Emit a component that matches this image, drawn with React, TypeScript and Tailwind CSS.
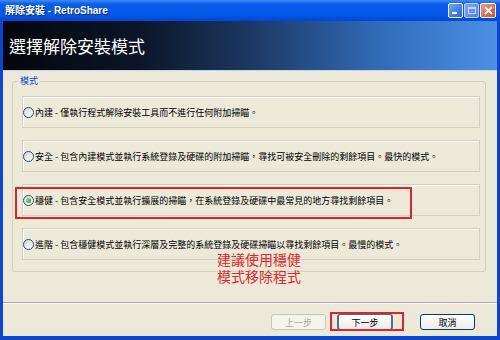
import React from "react";

const rows = [
  { text: "內建 - 僅執行程式解除安裝工具而不進行任何附加掃瞄。", checked: false },
  { text: "安全 - 包含內建模式並執行系統登錄及硬碟的附加掃瞄，尋找可被安全刪除的剩餘項目。最快的模式。", checked: false },
  { text: "穩健 - 包含安全模式並執行擴展的掃瞄，在系統登錄及硬碟中最常見的地方尋找剩餘項目。", checked: true },
  { text: "進階 - 包含穩健模式並執行深層及完整的系統登錄及硬碟掃瞄以尋找剩餘項目。最慢的模式。", checked: false },
];

function Radio({ checked }: { checked: boolean }) {
  return (
    <span className="flex h-[11px] w-[11px] shrink-0 items-center justify-center rounded-full border border-[#1c5180] bg-[linear-gradient(135deg,#d8d5c8,#ffffff)]">
      {checked && <span className="h-[5px] w-[5px] rounded-full bg-[radial-gradient(circle_at_35%_35%,#7ee07e,#1f961f)]" />}
    </span>
  );
}

function TitleBar() {
  return (
    <div className="flex h-[21px] shrink-0 items-center justify-between bg-[linear-gradient(to_bottom,#3a8cf6_0%,#0a5ce9_20%,#0457e6_70%,#0247d6_100%)] pl-[5px] pr-[4px]">
      <span className="text-[10px] font-bold leading-none text-white [text-shadow:1px_1px_0_#0b2a86] font-['Liberation_Sans','Noto_Sans_CJK_TC',sans-serif]">
        解除安裝 - RetroShare
      </span>
      <div className="flex gap-[1px]">
        <div className="relative h-[15px] w-[15px] rounded-[2px] border border-white bg-[linear-gradient(135deg,#6fa5f7,#2a63e2)]">
          <span className="absolute bottom-[3px] left-[3px] h-[2px] w-[5px] bg-white" />
        </div>
        <div className="flex h-[15px] w-[15px] items-center justify-center rounded-[2px] border border-[#bcd0f6] bg-[linear-gradient(135deg,#7fa9f2,#4c83ea)]">
          <span className="h-[7px] w-[8px] border border-t-2 border-[#c6d6f6]" />
        </div>
        <div className="flex h-[15px] w-[16px] items-center justify-center rounded-[2px] border border-white bg-[linear-gradient(135deg,#f09a78,#d8462a)]">
          <svg width="9" height="9" viewBox="0 0 9 9">
            <path d="M1 1 L8 8 M8 1 L1 8" stroke="white" strokeWidth="1.8" />
          </svg>
        </div>
      </div>
    </div>
  );
}

export default function App() {
  return (
    <div className="relative flex h-[340px] w-[500px] flex-col overflow-hidden bg-[#0a45d6] pb-[4px] font-['Noto_Sans_CJK_TC',sans-serif]">
      <TitleBar />
      <div className="mx-[3px] flex flex-1 flex-col bg-[#ece9d8]">
        <div className="flex h-[50px] shrink-0 items-center border-b border-[#c9d6ea] bg-[linear-gradient(to_right,#04060b_0%,#0c1628_28%,#1c3862_50%,#3069b4_75%,#4a90e6_100%)] pl-[6px] text-[17px] leading-none text-white">
          選擇解除安裝模式
        </div>

        <div className="relative ml-[9px] mr-[11px] mt-[10px] h-[191px] rounded-[3px] border border-[#d0d0bf] pl-[9px] pr-[5px] pt-[14px]">
          <span className="absolute -top-[7px] left-[5px] bg-[#ece9d8] px-[2px] text-[9px] leading-[12px] text-[#0046d5]">
            模式
          </span>
          <div className="flex flex-col gap-[12px]">
            {rows.map((r) => (
              <div
                key={r.text}
                className="flex h-[32px] items-center gap-[1px] border border-[#d3d0c1] text-[9px] leading-none text-black shadow-[inset_1px_1px_0_#fbfaf5]"
              >
                <Radio checked={r.checked} />
                <span className="whitespace-nowrap">{r.text}</span>
              </div>
            ))}
          </div>
        </div>

        <div className="mt-[30px] h-[2px] border-t border-b border-t-[#aca899] border-b-white" />

        <div className="mt-[10px] flex justify-end pr-[22px] text-[9px] leading-none">
          <button className="flex h-[16px] w-[55px] items-center justify-center rounded-[3px] border border-[#c9c7ba] bg-[#f5f4ea] text-[#aca899]">
            上一步
          </button>
          <button className="ml-[11px] flex h-[16px] w-[56px] items-center justify-center rounded-[3px] border border-x-2 border-[#5a6a80] bg-[linear-gradient(to_bottom,#ffffff,#ecebe6)] text-black">
            下一步
          </button>
          <button className="ml-[27px] flex h-[16px] w-[55px] items-center justify-center rounded-[3px] border border-[#003c74] bg-[linear-gradient(to_bottom,#ffffff,#ecebe6)] text-black">
            取消
          </button>
        </div>
      </div>

      <div className="absolute left-[15px] top-[187px] h-[32px] w-[397px] border-2 border-[#d9262c]" />
      <div className="absolute left-[330px] top-[312px] h-[19px] w-[74px] border-2 border-[#d9262c]" />
      <div className="absolute left-[208px] top-[251px] flex w-[102px] flex-col items-center gap-[1px] text-[14px] leading-[16px] text-[#e3262b]">
        <span>建議使用穩健</span>
        <span>模式移除程式</span>
      </div>
    </div>
  );
}
